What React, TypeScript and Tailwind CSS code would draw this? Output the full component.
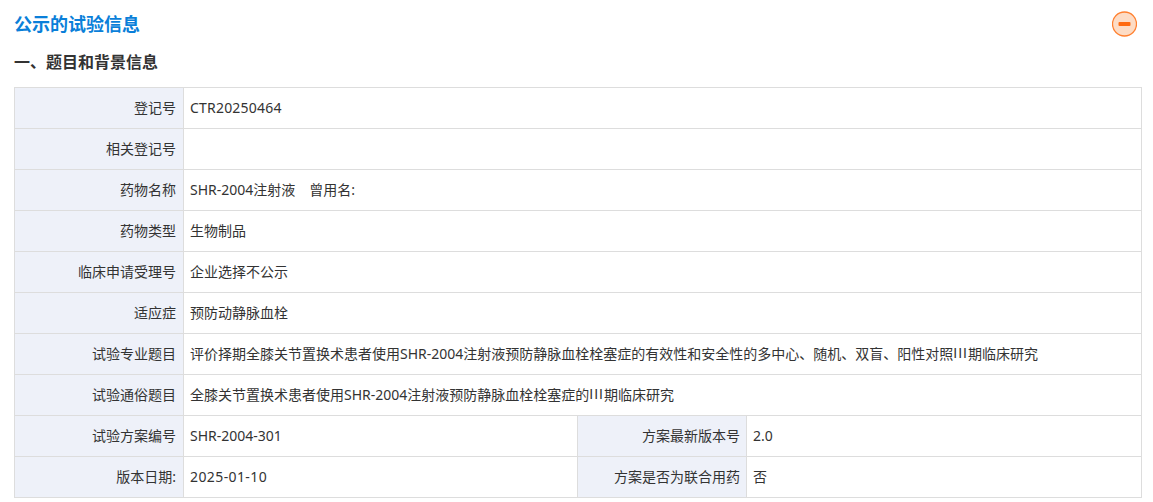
const font = "font-['Noto_Sans','Noto_Sans_CJK_SC',sans-serif]"

type RowProps = {
  label: string
  value: React.ReactNode
}

const Label = ({ children }: { children: React.ReactNode }) => (
  <div className="flex w-[168px] shrink-0 items-center justify-end bg-[#eef1f9] pr-[7px] pb-[2px] text-[14px] text-[#333]">
    {children}
  </div>
)

const Value = ({ children }: { children: React.ReactNode }) => (
  <div className="flex flex-1 items-center border-l border-[#dddddd] pl-[6px] pb-[2px] text-[14px] text-[#333]">{children}</div>
)

const Row = ({ label, value }: RowProps) => (
  <div className="flex h-[41px] border-b border-[#dddddd]">
    <Label>{label}</Label>
    <Value>{value}</Value>
  </div>
)

const DoubleRow = ({ a, b, c, d }: { a: string; b: React.ReactNode; c: string; d: string }) => (
  <div className="flex h-[41px] border-b border-[#dddddd]">
    <Label>{a}</Label>
    <div className="flex w-[394px] items-center border-l border-[#dddddd] pl-[6px] pb-[2px] text-[14px] text-[#333]">{b}</div>
    <div className="flex w-[169px] items-center justify-end border-l border-[#dddddd] bg-[#eef1f9] pr-[6px] pb-[2px] text-[14px] text-[#333]">{c}</div>
    <Value>{d}</Value>
  </div>
)

// the plain I without serifs, same advance as the reference
const Roman = () => <span className="font-['Liberation_Sans',sans-serif] tracking-[1px]">III</span>

const rows: [string, React.ReactNode][] = [
  ['登记号', <span className="tracking-[0.2px]">CTR20250464</span>],
  ['相关登记号', ''],
  ['药物名称', 'SHR-2004注射液\u3000曾用名:'],
  ['药物类型', '生物制品'],
  ['临床申请受理号', '企业选择不公示'],
  ['适应症', '预防动静脉血栓'],
  ['试验专业题目', <>评价择期全膝关节置换术患者使用SHR-2004注射液预防静脉血栓栓塞症的有效性和安全性的多中心、随机、双盲、阳性对照<Roman />期临床研究</>],
  ['试验通俗题目', <>全膝关节置换术患者使用SHR-2004注射液预防静脉血栓栓塞症的<Roman />期临床研究</>],
]

export default function App() {
  return (
    <div className={`h-[502px] w-[1153px] overflow-hidden bg-white ${font}`}>
      <div className="flex h-[48px] items-center justify-between pl-[14px] pr-[16px]">
        <h2 className="text-[18px] font-bold text-[#0a7fd9]">公示的试验信息</h2>
        <svg width="25" height="26" viewBox="0 0 25 26">
          <circle cx="12.5" cy="13" r="12" fill="#fddcc5" stroke="#ff8030" strokeWidth="1.3" />
          <rect x="6.5" y="11" width="12" height="4" rx="1" fill="#ff6a10" />
        </svg>
      </div>
      <h3 className="ml-[14px] mb-[10px] mt-[-1px] text-[16px] leading-[30px] font-bold text-[#333]">一、题目和背景信息</h3>
      <div className="mx-[14px] w-[1128px] border border-b-0 border-[#dddddd]">
        {rows.map(([label, value]) => (
          <Row key={label} label={label} value={value} />
        ))}
        <DoubleRow a="试验方案编号" b="SHR-2004-301" c="方案最新版本号" d="2.0" />
        <DoubleRow a="版本日期:" b={<span className="tracking-[0.4px]">2025-01-10</span>} c="方案是否为联合用药" d="否" />
      </div>
    </div>
  )
}
